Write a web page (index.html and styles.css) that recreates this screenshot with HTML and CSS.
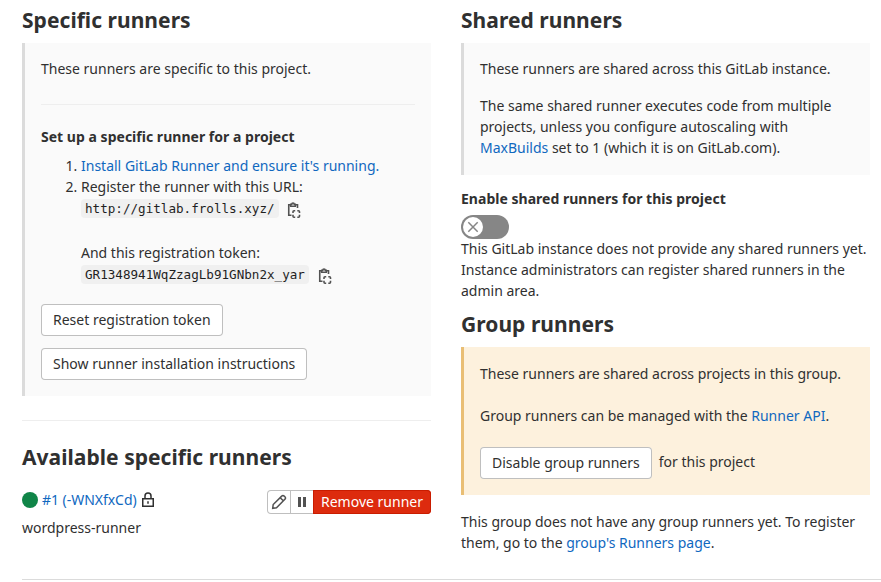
FILE: index.html
```
<!DOCTYPE html>
<html lang="en">
<head>
<meta charset="utf-8">
<title>Runners</title>
<link rel="stylesheet" href="styles.css">
</head>
<body>
<main class="runners">
  <section class="column">
    <h4>Specific runners</h4>
    <div class="callout specific">
      <p>These runners are specific to this project.</p>
      <hr class="callout-rule">
      <h5>Set up a specific runner for a project</h5>
      <ol>
        <li><a href="#">Install GitLab Runner and ensure it's running.</a></li>
        <li>Register the runner with this URL:
          <div class="copy-row url-row"><code>http://gitlab.frolls.xyz/</code>
            <svg class="copy" viewBox="0 0 16 16"><path d="M4.5 2.75H2.75v10.5H5.5M9.5 2.75h2V6M4.75 4.2V2.2h1a1.25 1.25 0 0 1 2.5 0h1v2z"/><path d="M7 11V9.75a1 1 0 0 1 1-1H9.2M11.3 8.75h1.2a1 1 0 0 1 1 1V11M13.5 12.8v1.4a1 1 0 0 1-1 1H11.3M9.2 15.2H8a1 1 0 0 1-1-1V12.8"/></svg>
          </div>
          <div>And this registration token:</div>
          <div class="copy-row"><code>GR1348941WqZzagLb91GNbn2x_yar</code>
            <svg class="copy token-copy" viewBox="0 0 16 16"><path d="M4.5 2.75H2.75v10.5H5.5M9.5 2.75h2V6M4.75 4.2V2.2h1a1.25 1.25 0 0 1 2.5 0h1v2z"/><path d="M7 11V9.75a1 1 0 0 1 1-1H9.2M11.3 8.75h1.2a1 1 0 0 1 1 1V11M13.5 12.8v1.4a1 1 0 0 1-1 1H11.3M9.2 15.2H8a1 1 0 0 1-1-1V12.8"/></svg>
          </div>
        </li>
      </ol>
      <div class="actions">
        <button class="btn">Reset registration token</button>
        <button class="btn">Show runner installation instructions</button>
      </div>
    </div>
    <hr class="section-rule">
    <h4>Available specific runners</h4>
    <div class="runner">
      <div class="runner-name">
        <span class="status"></span>
        <a href="#">#1 (-WNXfxCd)</a>
        <svg class="lock" viewBox="0 0 16 16"><path d="M2.75 6.75h10.5v7.5H2.75zM5 6.5V4a3 3 0 0 1 6 0v2.5"/><path d="M8 9.3v2.4"/></svg>
      </div>
      <div class="btn-group">
        <button class="icon-btn edit" aria-label="Edit"><svg viewBox="0 0 16 16"><path d="M1.7 14.3l.5-3.8 8.5-8.4a1.8 1.8 0 0 1 2.5 0l.7.7a1.8 1.8 0 0 1 0 2.5l-8.4 8.5zM9.2 3.7l3.1 3.1"/></svg></button>
        <button class="icon-btn pause" aria-label="Pause"><svg viewBox="0 0 16 16"><path d="M4 3h3v10H4zM9 3h3v10H9z"/></svg></button>
        <button class="remove">Remove runner</button>
      </div>
    </div>
    <p class="description">wordpress-runner</p>
  </section>
  <section class="column">
    <h4>Shared runners</h4>
    <div class="callout shared">
      <p>These runners are shared across this GitLab instance.</p>
      <p>The same shared runner executes code from multiple projects, unless you configure autoscaling with <a href="#">MaxBuilds</a> set to 1 (which it is on GitLab.com).</p>
    </div>
    <h5 class="toggle-label">Enable shared runners for this project</h5>
    <div class="toggle"><span><svg viewBox="0 0 16 16"><path d="M3.3 3.3l9.4 9.4M12.7 3.3l-9.4 9.4"/></svg></span></div>
    <p class="shared-note">This GitLab instance does not provide any shared runners yet. Instance administrators can register shared runners in the admin area.</p>
    <h4 class="group-title">Group runners</h4>
    <div class="callout warning">
      <p>These runners are shared across projects in this group.</p>
      <p>Group runners can be managed with the <a href="#">Runner API</a>.</p>
      <div class="disable"><button class="btn">Disable group runners</button><span>for this project</span></div>
    </div>
    <p class="group-note">This group does not have any group runners yet. To register them, go to the <a href="#">group's Runners page</a>.</p>
  </section>
</main>
<hr class="page-rule">
</body>
</html>
```
FILE: styles.css
```
* { box-sizing: border-box; }
body {
  margin: 0;
  height: 582px;
  overflow: hidden;
  background: #fff;
  color: #303030;
  font: 14px/21px "Noto Sans", sans-serif;
}
p, h4, h5, ol { margin: 0; }
a { color: #1068bf; text-decoration: none; }
hr { border: 0; height: 1px; margin: 0; }
button { font: inherit; color: inherit; }
svg { display: block; fill: none; stroke: #303030; stroke-width: 1.5; }

.runners {
  display: grid;
  grid-template-columns: 409px 409px;
  column-gap: 30px;
  padding: 7px 0 0 22px;
  height: 579px;
}
h4 { font-size: 21px; line-height: 27px; font-weight: 700; letter-spacing: 0.04px; }
h5 { font-size: 14px; line-height: 21px; font-weight: 700; letter-spacing: 0.02px; }

.callout {
  margin-top: 9px;
  padding: 16px;
  border-left: 3px solid #dbdbdb;
  background: #fafafa;
}
.specific { padding-top: 15px; }
.shared { padding-top: 15px; padding-bottom: 17px; }
.callout p + p { margin-top: 16px; }
.callout-rule { background: #eee; margin: 25px 0 21px; }
ol { padding-left: 40px; margin-top: 8px; }
.copy-row { display: flex; align-items: center; height: 22px; }
.url-row { margin-bottom: 23px; }
code {
  font: 12.6px/15px "DejaVu Sans Mono", monospace;
  padding: 2px 4px;
  border-radius: 4px;
  background: #f0f0f0;
  color: #1f1f1f;
}
.copy { width: 16px; height: 16px; margin: 3px 0 0 7px; stroke: #525252; stroke-width: 1.6; }
.token-copy { margin-left: 8px; }
.actions { display: flex; flex-direction: column; align-items: flex-start; gap: 12px; margin-top: 19px; }
.btn {
  height: 32px;
  padding: 0 12px 2px;
  border: 0;
  border-radius: 4px;
  background: #fff;
  box-shadow: inset 0 0 0 1px #bfbfbf;
}

.section-rule { background: #eee; margin: 24px 0 23px; }
.runner { display: flex; justify-content: space-between; margin-top: 18px; height: 25px; }
.runner-name { display: flex; align-items: center; height: 21px; }
.status { width: 16px; height: 16px; margin-right: 4px; border-radius: 50%; background: #108548; }
.runner-name a { letter-spacing: -0.04px; }
.lock { width: 16px; height: 16px; margin-left: 3px; }
.btn-group { display: flex; height: 24px; margin-top: 1px; }
.btn-group button { height: 24px; border: 0; padding: 0; }
.icon-btn {
  display: flex;
  align-items: center;
  justify-content: center;
  width: 24px;
  background: #fff;
  box-shadow: inset 0 0 0 1px #bfbfbf;
}
.icon-btn svg { width: 16px; height: 16px; stroke: #525252; }
.edit { border-radius: 4px 0 0 4px; }
.pause { margin-left: -1px; }
.pause svg { fill: #525252; stroke: none; }
.btn-group .remove {
  width: 118px;
  margin-left: -1px;
  padding-bottom: 2px;
  border-radius: 0 4px 4px 0;
  background: #dd2b0e;
  box-shadow: inset 0 0 0 1px #c91c00;
  color: #fff;
}
.description { margin-top: 3px; }

.toggle-label { margin-top: 13px; }
.toggle { width: 48px; height: 24px; margin: 6px 0 0; padding: 2px; border-radius: 12px; background: #868686; }
.toggle span { display: flex; align-items: center; justify-content: center; width: 20px; height: 20px; border-radius: 50%; background: #fff; }
.toggle svg { width: 16px; height: 16px; stroke: #868686; }
.shared-note { margin-top: -1px; }
.group-title { margin-top: 10px; }
.warning { border-color: #e9be74; background: #fdf1dd; }
.warning p + p { margin-top: 21px; }
.disable { display: flex; margin-top: 21px; }
.disable span { margin: 4px 0 0 7px; }
.group-note { margin-top: 16px; }
.page-rule { background: #dbdbdb; margin-left: 22px; }
```
